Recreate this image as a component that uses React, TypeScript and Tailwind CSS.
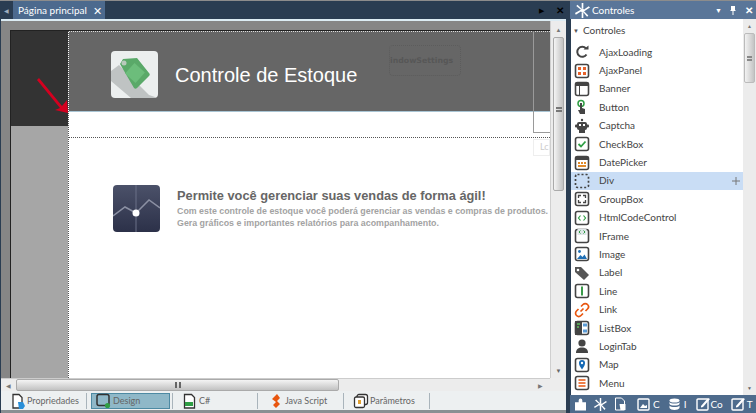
const A = "font-['Lato','Noto_Sans',sans-serif]";

const S = ({ children, c = "" }: { children: React.ReactNode; c?: string }) => (
  <svg viewBox="0 0 16 16" width="16" height="16" fill="none" className={c}>{children}</svg>
);
const Box = ({ children }: { children?: React.ReactNode }) => (
  <>
    <rect x="1.500" y="1.500" width="13" height="13" rx="2" stroke="#444" strokeWidth="1.600" fill="#fff" />
    {children}
  </>
);

const items: [string, React.ReactNode][] = [
  ["AjaxLoading", <S><path d="M12.500 10.500A5 5 0 1 1 12 4.500" stroke="#444" strokeWidth="2" /><path d="M9.500 5.500h5v-4z" fill="#444" /></S>],
  ["AjaxPanel", <S><Box><g fill="#e8622a"><rect x="4" y="4" width="3" height="3" /><rect x="9" y="4" width="3" height="3" /><rect x="4" y="9" width="3" height="3" /><rect x="9" y="9" width="3" height="3" /></g></Box></S>],
  ["Banner", <S><Box><rect x="1.500" y="1.500" width="13" height="3.500" fill="#444" /><path d="M5.500 5v9" stroke="#444" /></Box></S>],
  ["Button", <S><circle cx="7" cy="4.500" r="3" stroke="#2f9e44" strokeWidth="1.500" /><path d="M6 4h2v5l3 1v5H6l-2-4 2 0z" fill="#444" /></S>],
  ["Captcha", <S><circle cx="8" cy="2" r="1.200" fill="#444" /><rect x="3" y="4" width="10" height="8" rx="2" fill="#444" /><rect x="1" y="6.500" width="14" height="3" rx="1" fill="#444" /><rect x="5" y="6" width="2" height="2" fill="#fff" /><rect x="9" y="6" width="2" height="2" fill="#fff" /><rect x="5" y="12" width="6" height="3" fill="#444" /></S>],
  ["CheckBox", <S><Box><path d="M4.500 8l2.500 2.500 4.500-5" stroke="#2f9e44" strokeWidth="1.800" /></Box></S>],
  ["DatePicker", <S><Box><rect x="1.500" y="1.500" width="13" height="3.500" fill="#444" /><g fill="#e08a2a"><rect x="4" y="7" width="2" height="2" /><rect x="7" y="7" width="2" height="2" /><rect x="10" y="7" width="2" height="2" /><rect x="4" y="10" width="8" height="2" /></g></Box></S>],
  ["Div", <S><rect x="1.500" y="1.500" width="13" height="13" rx="2" stroke="#444" strokeWidth="1.700" strokeDasharray="2 2" /></S>],
  ["GroupBox", <S><Box><path d="M7 4.500H4.500V7M9 4.500h2.500V7M7 11.500H4.500V9M9 11.500h2.500V9" stroke="#444" strokeWidth="1.300" /></Box></S>],
  ["HtmlCodeControl", <S><Box><path d="M6.500 5.500L4.500 8l2 2.500M9.500 5.500l2 2.500-2 2.500" stroke="#2f9e44" strokeWidth="1.200" /></Box></S>],
  ["IFrame", <S><Box><rect x="3.500" y="1" width="9" height="6" fill="#dfe6e8" /><path d="M6.500 2.500L5 4l1.500 1.500M9.500 2.500L11 4 9.500 5.500" stroke="#2f9e44" /></Box></S>],
  ["Image", <S><Box><path d="M3 13l3.500-4 2 2 2-2.500L13 13z" fill="#1f6fb5" /><circle cx="5.500" cy="5.500" r="1.400" fill="#1f6fb5" /></Box></S>],
  ["Label", <S><path d="M1 2h6l8 8-5 5-9-8z" fill="#555" /><circle cx="4" cy="5" r="1.300" fill="#fff" /></S>],
  ["Line", <S><Box><rect x="7" y="3.500" width="2" height="9" fill="#3a9a4a" /></Box></S>],
  ["Link", <S><path d="M6.500 9.500l3-3M7 4.500l2-2a2.500 2.500 0 0 1 4.500 4.500l-2 2M9 11.500l-2 2A2.500 2.500 0 0 1 2.500 9l2-2" stroke="#e8560f" strokeWidth="1.700" /></S>],
  ["ListBox", <S><Box><rect x="1" y="1" width="7" height="14" fill="#444" /><path d="M3 4h3M3 7h2" stroke="#5fbf5f" strokeWidth="1.500" /><rect x="9" y="3.500" width="4" height="3" fill="#5b9bd5" /><rect x="9" y="9.500" width="4" height="3" fill="#5b9bd5" /></Box></S>],
  ["LoginTab", <S><circle cx="8" cy="5" r="3.600" fill="#444" /><path d="M2 15c0-4 2.500-5.500 6-5.500s6 1.500 6 5.500z" fill="#444" /></S>],
  ["Map", <S><Box><path d="M8 12.500C6 9.500 5 8 5 6a3 3 0 0 1 6 0c0 2-1 3.500-3 6.500z" fill="#1368b5" /><circle cx="8" cy="6" r="1.200" fill="#fff" /></Box></S>],
  ["Menu", <S><Box><path d="M4.500 5h7M4.500 8h7M4.500 11h7" stroke="#e8560f" strokeWidth="1.700" /></Box></S>],
];

const Asterisk = ({ s = 18 }: { s?: number }) => (
  <svg viewBox="0 0 18 18" width={s} height={s} fill="#fff">
    <circle cx="9" cy="9" r="2.200" />
    <path d="M8 0h2v7H8zM8 11h2v7H8zM1.500 3.500L3 2l5.500 5.500-1 1zM9.500 10.500l1-1L16 15l-1.500 1.500zM0 12l7-4 1 1.500L1 14zM10 8.500L16.500 4l1.500 1.500L11 10z" />
  </svg>
);

const bottomTabs: [string, number, React.ReactNode, string][] = [
  ["Propriedades", 83, <S><path d="M3 1.500h6l3 3V15H3z" stroke="#333" strokeWidth="1.300" fill="#fff" /><path d="M8 9l5 0 2 4-2 3H9z" fill="#2a8fd8" /></S>, "pl-[6px]"],
  ["Design", 86, <S><rect x="1" y="1.500" width="12" height="11" rx="2" stroke="#333" strokeWidth="1.500" /><circle cx="11.500" cy="12.500" r="2.600" fill="#2f9e44" /></S>, "w-[79px] ml-[4px] pl-[4px] bg-[#8fb8c8] border border-[#4d8aa3]"],
  ["C#", 85, <S><path d="M2.500 1.500h7l3 3V15h-10z" stroke="#333" strokeWidth="1.300" fill="#fff" /><rect x="3" y="9" width="8" height="4" fill="#2f9e44" /></S>, "pl-[9px]"],
  ["Java Script", 86, <S><path d="M9 1L4 6l4 3-3 3 3 3 4-4-3-3 3-3z" fill="#e8560f" /></S>, "pl-[10px]"],
  ["Parâmetros", 86, <S><rect x="4" y="1.500" width="10.500" height="10" rx="2" stroke="#333" strokeWidth="1.300" fill="#fff" /><rect x="1.500" y="4" width="10" height="10.500" rx="1.500" stroke="#333" strokeWidth="1.300" fill="#fff" /><rect x="5" y="7" width="3" height="4" fill="#e0a030" /></S>, "pl-[9px]"],
];

export default function App() {
  return (
    <div className={`w-[756px] h-[413px] overflow-hidden flex flex-col bg-[#2a3d52] ${A}`}>
      <div className="h-px bg-[#8c8c8c] shrink-0" />
      <div className="flex flex-1 min-h-0">
        {/* Document pane */}
        <div className="w-[570px] flex flex-col shrink-0">
          <div className="h-[18px] flex items-center shrink-0 relative">
            <span className="w-[13px] text-[6px] text-[#9fb0c0] text-center">◀</span>
            <div className="w-[92px] h-[18px] bg-[#4c6a8e] flex items-center pl-[5px] gap-[6px] text-white text-[10px] whitespace-nowrap">
              <span>Página principal</span>
              <span className="text-[11px] leading-none">✕</span>
            </div>
            <div className="flex-1" />
            <span className="text-[7px] text-black mr-[12px]">▶</span>
            <span className="text-[10px] text-black font-bold mr-[6px]">✕</span>
          </div>
          <div className="h-[2px] ml-px mr-[4px] bg-[#dcecf4] shrink-0" />
          <div className="flex-1 min-h-0 flex flex-col mr-[4px] ml-px bg-[#ededed]">
            <div className="flex-1 min-h-0 flex">
              <div className="flex-1 min-w-0 bg-[#868686] pl-[9px] pt-[9px] overflow-hidden">
                <div className="relative h-full flex border-t border-l border-[#222] overflow-hidden">
                  <div className="w-[57px] flex flex-col shrink-0">
                    <div className="h-[95px] bg-[#333333]" />
                    <div className="flex-1 bg-[#a6a6a6]" />
                  </div>
                  <div className="flex-1 min-w-0 flex flex-col bg-white border-l border-dotted border-[#555]">
                    <div className="h-[80px] shrink-0 bg-[#666666] border-t border-dotted border-[#ddd] flex items-center pl-[42px] pt-[6px] relative">
                      <div className="w-[47px] h-[47px] rounded-[4px] bg-[#ecefef] overflow-hidden shrink-0">
                        <svg viewBox="0 0 47 47" width="47" height="47">
                          <path d="M8 14L38 44 47 47H20L0 30V20z" fill="#bfc3c3" />
                          <path d="M9 13l3-5 14-1 12 15c1 1 1 2 0 3L26 37c-1 1-2 1-3 0z" fill="#5aa969" />
                          <rect x="17" y="15" width="14" height="14" transform="rotate(42 24 22)" fill="#6cbd7b" />
                          <circle cx="13" cy="12" r="2.500" fill="#b9c9bc" />
                        </svg>
                      </div>
                      <span className="ml-[17px] text-[20px] text-white font-['Liberation_Sans',sans-serif]">Controle de Estoque</span>
                      <div className="absolute left-[320px] top-[13px] w-[72px] h-[31px] rounded-[4px] border border-dotted border-[#5c5c5c] flex items-center overflow-hidden">
                        <span className="font-['DejaVu_Sans',sans-serif] font-bold text-[7.800px] text-[#575757] whitespace-nowrap">indowSettings</span>
                      </div>
                    </div>
                    <div className="h-[26px] shrink-0 border-t border-[#a9c5d4]" />
                    <div className="border-t border-dotted border-[#555]" />
                    <div className="flex pl-[44px] pt-[47px] font-['Liberation_Sans',sans-serif]">
                      <div className="w-[47px] h-[47px] rounded-[4px] bg-[linear-gradient(#4b5169,#2c3149)] overflow-hidden shrink-0">
                        <svg viewBox="0 0 47 47" width="47" height="47" fill="none">
                          <path d="M23 0v47" stroke="#6a7088" />
                          <path d="M0 31l12-9 11 6 13-13 11 8" stroke="#8b90a3" strokeWidth="1.500" />
                          <circle cx="23" cy="28" r="3.500" fill="#fff" />
                        </svg>
                      </div>
                      <div className="ml-[17px] whitespace-nowrap">
                        <div className="text-[12.800px] font-bold text-[#666] leading-[16px] mt-[3px]">Permite você gerenciar suas vendas de forma ágil!</div>
                        <div className="text-[8.850px] font-bold text-[#a3a3a3] leading-[12px] mt-[1px]">
                          Com este controle de estoque você poderá gerenciar as vendas e compras de produtos.<br />
                          Gera gráficos e importantes relatórios para acompanhamento.
                        </div>
                      </div>
                    </div>
                  </div>
                  <div className="absolute right-0 top-0 w-[17px] h-[102px] border-l border-b border-[#9a9a9a]" />
                  <div className="absolute right-0 top-[108px] w-[17px] h-[17px] border border-[#eee] text-[9px] text-[#ccc] pl-[6px]">Lc</div>
                  <svg className="absolute left-[26px] top-[47px]" width="34" height="38" viewBox="0 0 34 38">
                    <path d="M0 2L2 0 25 28 30 22 31 35 18 32 23 30Z" fill="#d4001f" />
                  </svg>
                </div>
              </div>
              {/* vertical scrollbar */}
              <div className="w-[16px] bg-[#ececec] flex flex-col items-center shrink-0 border-l border-[#cfcfcf]">
                <span className="text-[6px] text-[#777] h-[15px] leading-[15px] mt-[1px]">▲</span>
                <div className="w-[11px] h-[154px] border border-[#aaa] rounded-[2px] bg-[linear-gradient(90deg,#f4f4f4,#c2c2c2)] flex items-start justify-center pt-[69px]">
                  <div className="w-[6px] h-[5px] border-y-2 border-[#777]" />
                </div>
                <div className="flex-1" />
                <span className="text-[6px] text-[#666] mb-[3px]">▼</span>
              </div>
            </div>
            {/* horizontal scrollbar */}
            <div className="h-[13px] mr-[16px] flex items-center bg-[#ececec] shrink-0 border-t border-[#ccc]">
              <span className="w-[15px] text-[6px] text-center text-[#777]">◀</span>
              <div className="w-[323px] h-[12px] border border-[#aaa] rounded-[2px] bg-[linear-gradient(#f4f4f4,#c2c2c2)] flex items-center justify-center">
                <div className="w-[6px] h-[6px] border-x-2 border-[#666]" />
              </div>
              <div className="flex-1" />
              <span className="w-[16px] text-[6px] text-center text-[#777] mr-[2px]">▶</span>
            </div>
            {/* bottom tabs */}
            <div className="h-[19px] flex items-center bg-[#edf0f1] shrink-0 text-[9px] text-[#666] pl-[3px]">
              {bottomTabs.map(([t, w, icon, cls]) => (
                <div key={t} style={{ width: w }} className="h-[16px] flex items-center shrink-0 border-r border-[#a9b4bb]">
                  <div className={`h-[16px] flex items-center gap-[1px] ${cls}`}>
                    {icon}
                    <span className="whitespace-nowrap">{t}</span>
                  </div>
                </div>
              ))}
            </div>
            <div className="h-[3px] bg-[#8a8f92] shrink-0" />
          </div>
        </div>
        {/* Controls panel */}
        <div className="flex-1 min-w-0 flex flex-col">
          <div className="h-[18px] bg-[#5a7699] flex items-center pl-[5px] text-white text-[10px] shrink-0">
            <Asterisk s={15} />
            <span className="ml-[2px] flex-1">Controles</span>
            <span className="text-[7px] mr-[7px]">▼</span>
            <svg width="8" height="10" viewBox="0 0 8 10" className="mr-[8px]"><path d="M2 1h4v4l1 1H1l1-1zM3.500 6h1v4h-1z" fill="#fff" /></svg>
            <span className="text-[10px] font-bold mr-[3px]">✕</span>
          </div>
          <div className="flex-1 min-h-0 flex bg-white ml-px">
            <div className="flex-1 min-w-0 overflow-hidden text-[10px] text-[#444]">
              <div className="h-[23px] flex items-center pl-[2px]">
                <span className="text-[6px] text-[#555] w-[10px]">▼</span>
                <span>Controles</span>
              </div>
              <div className="h-px" />
              {items.map(([name, icon]) => (
                <div key={name} className={`h-[18.400px] flex items-center relative ${name === "Div" ? "bg-[#c9ddf5]" : ""}`}>
                  <span className="ml-[3px] w-[25px] shrink-0 flex">{icon}</span>
                  <span>{name}</span>
                  {name === "Div" && (
                    <svg className="absolute right-[3px] top-[5px]" width="8" height="8" viewBox="0 0 8 8"><path d="M4 0v8M0 4h8" stroke="#777" /></svg>
                  )}
                </div>
              ))}
            </div>
            <div className="w-[13px] bg-[#ececec] flex flex-col items-center shrink-0">
              <span className="text-[5px] text-[#777] h-[14px] leading-[14px]">▲</span>
              <div className="w-[11px] h-[50px] border border-[#bbb] rounded-[2px] bg-[linear-gradient(90deg,#f2f2f2,#c4c4c4)] flex items-center justify-center">
                <div className="w-[5px] h-[5px] border-y-2 border-[#888]" />
              </div>
              <div className="flex-1" />
              <span className="text-[5px] text-[#666] mb-[3px]">▼</span>
            </div>
          </div>
          <div className="h-[18px] bg-[#4e6b8c] flex items-center pl-[5px] text-[10px] text-white shrink-0 overflow-hidden whitespace-nowrap">
            <svg width="11" height="13" viewBox="0 0 12 13"><path d="M0 4h4V2a2 2 0 0 1 4 0v2h4v9H0z" fill="#fff" /></svg>
            <span className="ml-[8px] flex"><Asterisk s={13} /></span>
            <svg className="ml-[7px]" width="13" height="14" viewBox="0 0 12 14"><path d="M1 1h6l3 3v9H1z" stroke="#fff" fill="none" /><path d="M5 7l6 0v6H6z" fill="#fff" /></svg>
            <span className="ml-[10px] flex items-center gap-[3px]"><svg width="13" height="13" viewBox="0 0 13 13"><rect x="1" y="1" width="11" height="11" rx="1" stroke="#fff" fill="none" strokeWidth="1.400" /><path d="M3 10l3-4 2 2 2-1v3z" fill="#fff" /></svg>C</span>
            <span className="ml-[9px] flex items-center gap-[4px]"><svg width="11" height="13" viewBox="0 0 11 13"><ellipse cx="5.500" cy="2.500" rx="5" ry="2" fill="#fff" /><path d="M.5 4c1 2 9 2 10 0v2c-1 2-9 2-10 0zM.5 7.500c1 2 9 2 10 0V10c-1 2.500-9 2.500-10 0z" fill="#fff" /></svg>I</span>
            <span className="ml-[9px] flex items-center gap-[1px]"><svg width="14" height="14" viewBox="0 0 14 14"><rect x="1" y="2" width="11" height="11" rx="1" stroke="#fff" fill="none" strokeWidth="1.400" /><path d="M5 9l7-8 2 1-7 8-2 .5z" fill="#fff" /></svg>Co</span>
            <span className="ml-[8px] flex items-center gap-[2px]"><svg width="14" height="14" viewBox="0 0 14 14"><rect x="1" y="2" width="11" height="11" rx="1" stroke="#fff" fill="none" strokeWidth="1.400" /><path d="M5 9l7-8 2 1-7 8-2 .5z" fill="#fff" /></svg>T</span>
          </div>
        </div>
      </div>
    </div>
  );
}
